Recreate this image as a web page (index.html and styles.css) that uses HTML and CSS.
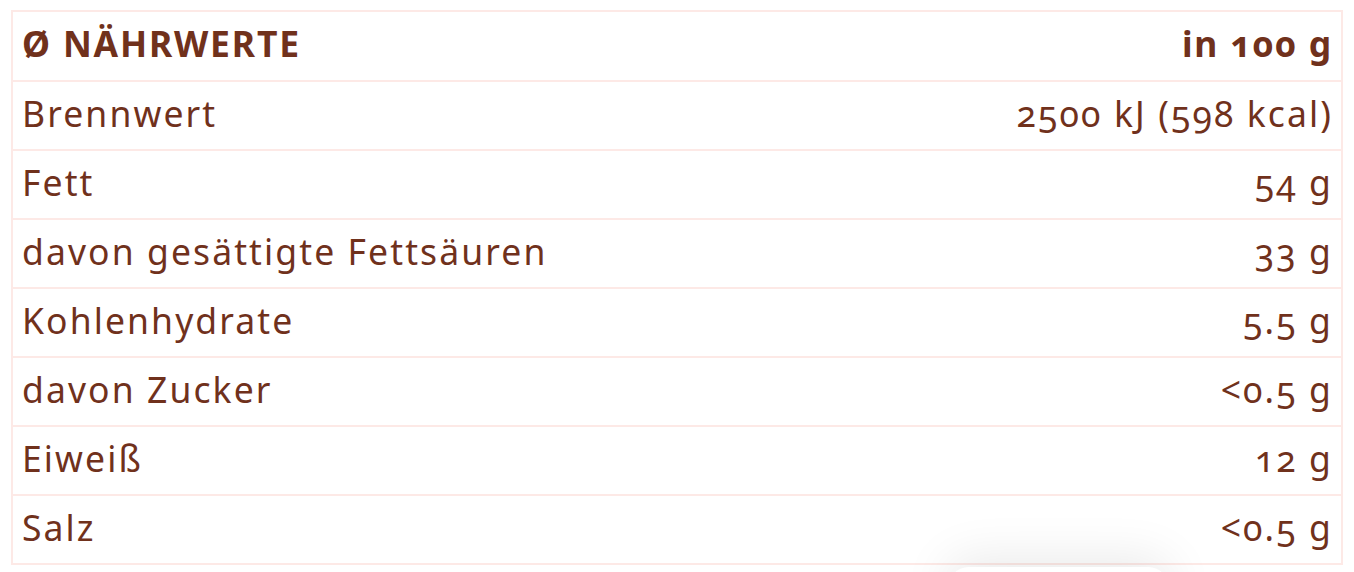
FILE: index.html
```html
<!DOCTYPE html>
<html lang="de">
<head>
<meta charset="utf-8">
<title>Nährwerte</title>
<link rel="stylesheet" href="styles.css">
</head>
<body>
<table class="nutrition">
  <thead>
    <tr class="head-row">
      <th class="label">Ø NÄHRWERTE</th>
      <th class="value">in 100 g</th>
    </tr>
  </thead>
  <tbody>
    <tr><td class="label">Brennwert</td><td class="value">2500 kJ (598 kcal)</td></tr>
    <tr><td class="label">Fett</td><td class="value">54 g</td></tr>
    <tr><td class="label">davon gesättigte Fettsäuren</td><td class="value">33 g</td></tr>
    <tr><td class="label">Kohlenhydrate</td><td class="value">5.5 g</td></tr>
    <tr><td class="label">davon Zucker</td><td class="value">&lt;0.5 g</td></tr>
    <tr><td class="label">Eiweiß</td><td class="value">12 g</td></tr>
    <tr><td class="label">Salz</td><td class="value">&lt;0.5 g</td></tr>
  </tbody>
</table>
<div class="floating-pill"></div>
</body>
</html>
```

FILE: styles.css
```css
html, body {
  margin: 0;
  padding: 0;
  background: #ffffff;
}

body {
  font-family: "Noto Sans", "Open Sans", sans-serif;
  color: #70311c;
  overflow: hidden;
}

.nutrition {
  margin: 10px 0 0 11px;
  width: 1332px;
  border-collapse: collapse;
  font-variant-numeric: oldstyle-nums;
}

.nutrition th,
.nutrition td {
  border: 2px solid #fde9e6;
  height: 63px;
  padding: 0 8px 4px 9px;
  vertical-align: middle;
  font-size: 35.5px;
  letter-spacing: 2.1px;
  line-height: 1;
}

.nutrition .head-row th {
  height: 64px;
  font-weight: 700;
  font-size: 35.5px;
  letter-spacing: 1.8px;
}

.nutrition .label {
  text-align: left;
  border-right: none;
}

.nutrition .value {
  text-align: right;
  border-left: none;
}

.floating-pill {
  position: fixed;
  left: 947px;
  top: 567px;
  width: 223px;
  height: 60px;
  background: #ffffff;
  border-radius: 22px;
  box-shadow: 0 -8px 50px rgba(0, 0, 0, 0.09);
}
```
